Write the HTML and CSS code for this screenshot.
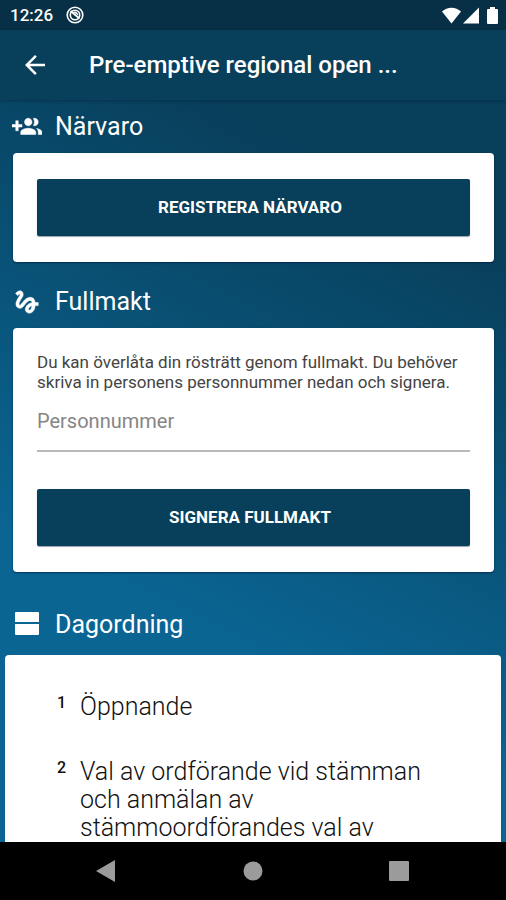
FILE: index.html
```html
<!DOCTYPE html>
<html lang="sv">
<head>
<meta charset="utf-8">
<meta name="viewport" content="width=device-width, initial-scale=1">
<title>Stämma</title>
<link rel="stylesheet" href="styles.css">
</head>
<body>
<div class="screen">
  <div class="status">
    <span class="clock">12:26</span>
    <svg class="status-app" width="18" height="18" viewBox="0 0 18 18" aria-hidden="true">
      <circle cx="9" cy="9" r="7.8" fill="none" stroke="#fff" stroke-width="1.600"/>
      <circle cx="9" cy="9" r="4.700" fill="none" stroke="#fff" stroke-width="1.600"/>
      <path d="M4.500 5l9 7.500" fill="none" stroke="#fff" stroke-width="1.800"/>
      <path d="M7 6c2.600-1.400 5 .4 5.400 3.600z" fill="#fff"/>
    </svg>
    <span class="status-icons">
      <svg width="19" height="17" viewBox="0 0 19 17" aria-hidden="true"><path d="M9.500 16.500L0 4.500C5-.6 14-.6 19 4.500z" fill="#fff"/></svg>
      <svg width="16" height="17" viewBox="0 0 16 17" aria-hidden="true"><path d="M16 .5v16H0z" fill="#fff"/></svg>
      <svg class="battery" width="11" height="17" viewBox="0 0 11 17" aria-hidden="true"><path d="M3 0h5v2h2a1 1 0 0 1 1 1v13a1 1 0 0 1-1 1H1a1 1 0 0 1-1-1V3a1 1 0 0 1 1-1h2z" fill="#fff"/></svg>
    </span>
  </div>
  <header class="appbar">
    <button class="back" type="button" aria-label="Tillbaka">
      <svg width="30" height="30" viewBox="0 0 24 24" aria-hidden="true"><path d="M20 11H7.830l5.590-5.590L12 4l-8 8 8 8 1.410-1.410L7.830 13H20z" fill="#fff"/></svg>
    </button>
    <h1 class="title">Pre-emptive regional open ...</h1>
  </header>
  <main class="content">
    <section>
      <h2 class="heading">
        <svg width="30" height="30" viewBox="0 0 24 24" aria-hidden="true"><path d="M8 10H5V7H3v3H0v2h3v3h2v-3h3v-2zm10 1c1.660 0 2.990-1.340 2.990-3S19.660 5 18 5c-.32 0-.63.050-.91.140.57.810.9 1.790.9 2.860s-.34 2.040-.9 2.860c.28.090.59.140.91.140zm-5 0c1.660 0 2.990-1.340 2.990-3S14.660 5 13 5s-3 1.340-3 3 1.340 3 3 3zm6.620 2.160c.83.730 1.380 1.660 1.380 2.840v2h3v-2c0-1.540-2.370-2.490-4.380-2.840zM13 13c-2 0-6 1-6 3v2h12v-2c0-2-4-3-6-3z" fill="#fff" stroke="#fff" stroke-width=".4"/></svg>
        Närvaro
      </h2>
      <div class="card">
        <button class="action" type="button">REGISTRERA NÄRVARO</button>
      </div>
    </section>
    <section>
      <h2 class="heading">
        <svg width="30" height="30" viewBox="0 0 24 24" aria-hidden="true"><path d="M4.590 6.890c.7-.71 1.400-1.350 1.710-1.220.5.200 0 1.030-.3 1.520-.25.420-2.860 3.890-2.860 6.310 0 1.280.48 2.340 1.340 2.980.75.560 1.740.73 2.640.46 1.070-.31 1.950-1.400 3.060-2.770 1.210-1.490 2.830-3.440 4.080-3.440 1.630 0 1.650 1.010 1.760 1.790-3.780.64-5.380 3.670-5.380 5.370s1.440 3.090 3.210 3.090c1.630 0 4.290-1.330 4.690-6.100H21v-2.500h-2.470c-.15-1.650-1.090-4.200-4.030-4.200-2.250 0-4.180 1.910-4.940 2.840-.58.730-2.060 2.480-2.290 2.720-.25.300-.68.840-1.110.84-.45 0-.72-.83-.36-1.920.35-1.090 1.400-2.860 1.850-3.520.78-1.140 1.300-1.920 1.300-3.280C8.950 3.690 7.310 3 6.440 3 5.120 3 3.970 4 3.720 4.250c-.36.360-.66.660-.88.930l1.750 1.710zm9.290 11.660c-.31 0-.74-.26-.74-.72 0-.6.730-2.200 2.870-2.760-.3 2.690-1.430 3.480-2.130 3.480z" fill="#fff" stroke="#fff" stroke-width=".4"/></svg>
        Fullmakt
      </h2>
      <form class="card proxy" onsubmit="return false">
        <p class="info">Du kan överlåta din rösträtt genom fullmakt. Du behöver skriva in personens personnummer nedan och signera.</p>
        <input class="field" type="text" placeholder="Personnummer" aria-label="Personnummer">
        <button class="action" type="submit">SIGNERA FULLMAKT</button>
      </form>
    </section>
    <section class="agenda-section">
      <h2 class="heading">
        <svg width="30" height="30" viewBox="0 0 30 30" aria-hidden="true"><path d="M4 2h22a1 1 0 0 1 1 1v9H3V3a1 1 0 0 1 1-1zM3 14h24v10a1 1 0 0 1-1 1H4a1 1 0 0 1-1-1z" fill="#fff"/></svg>
        Dagordning
      </h2>
      <div class="agenda">
        <div class="item"><span class="num">1</span><span>Öppnande</span></div>
        <div class="item"><span class="num">2</span><span>Val av ordförande vid stämman och anmälan av stämmoordförandes val av</span></div>
      </div>
    </section>
  </main>
  <nav class="navbar">
    <button type="button" aria-label="Bakåt"><svg width="20" height="22" viewBox="0 0 20 22" aria-hidden="true"><path d="M19 0v22L0 11z" fill="#9b9b9b"/></svg></button>
    <button type="button" aria-label="Hem"><svg width="20" height="20" viewBox="0 0 20 20" aria-hidden="true"><circle cx="10" cy="10" r="9.500" fill="#9b9b9b"/></svg></button>
    <button type="button" aria-label="Översikt"><svg width="20" height="20" viewBox="0 0 20 20" aria-hidden="true"><rect width="20" height="20" rx="1" fill="#9b9b9b"/></svg></button>
  </nav>
</div>
</body>
</html>
```
FILE: styles.css
```css
* { box-sizing: border-box; }
body {
  margin: 0;
  font-family: Roboto, "Liberation Sans", sans-serif;
  color: #111;
}
h1, h2, p { margin: 0; }
button { border: 0; padding: 0; background: none; font-family: inherit; }
svg { display: block; flex: none; }

.screen {
  height: 100vh;
  display: flex;
  flex-direction: column;
  overflow: hidden;
  background: linear-gradient(207deg, #083f5b 22%, #0a6593 68%, #0a6593 100%);
}
.status {
  flex: none;
  height: 30px;
  display: flex;
  align-items: center;
  padding: 0 8px 0 10px;
  gap: 13px;
  background: #073046;
  color: #fff;
}
.clock { font-size: 17px; line-height: 20px; font-weight: 500; }
.status-icons { display: flex; gap: 2px; margin-left: auto; }
.battery { margin-left: 6px; }

.appbar {
  flex: none;
  height: 70px;
  display: flex;
  align-items: center;
  gap: 39px;
  padding: 0 20px;
  background: #08405b;
  box-shadow: 0 1px 3px rgba(0, 20, 40, 0.4);
  color: #fff;
}
.title { font-size: 24px; line-height: 30px; font-weight: 500; white-space: nowrap; }

.content { flex: 1; min-height: 0; overflow: hidden; padding: 0 12px; }
.heading {
  display: flex;
  align-items: center;
  gap: 13px;
  height: 53px;
  font-size: 25px;
  font-weight: 400;
  color: #fff;
}
.card {
  display: flex;
  flex-direction: column;
  margin: 0 0 13px 1px;
  padding: 26px 24px;
  border-radius: 4px;
  background: #fff;
  box-shadow: 0 1px 2px rgba(0, 20, 60, 0.6);
}
.proxy { padding-top: 24px; }
.action {
  height: 57px;
  padding: 0 7px 1px 0;
  border-radius: 2px;
  background: #08405b;
  color: #fff;
  font-size: 17px;
  font-weight: 700;
  box-shadow: 0 1px 1px rgba(0, 20, 60, 0.4);
}
.info { font-size: 17px; line-height: 20px; color: #444; }
.field {
  width: 100%;
  height: 60px;
  margin-bottom: 37px;
  padding: 0;
  border: 0;
  border-bottom: 2px solid #b9b9b9;
  border-radius: 0;
  outline: 0;
  background: none;
  font-family: inherit;
  font-size: 20px;
}
.field::placeholder { color: #858585; opacity: 1; }

.agenda-section { padding-top: 13px; }
.agenda {
  display: flex;
  flex-direction: column;
  gap: 37px;
  margin: 4px -7px 0;
  padding: 38px 74px 0 50px;
  border-radius: 4px 4px 0 0;
  background: #fff;
  font-size: 25px;
  font-weight: 300;
  line-height: 28px;
}
.item { display: flex; gap: 12px; }
.num { width: 13px; flex: none; text-align: center; font-size: 16px; line-height: 20px; font-weight: 500; }

.navbar {
  flex: none;
  height: 58px;
  display: flex;
  align-items: center;
  justify-content: space-between;
  padding: 0 97px 0 96px;
  background: #000;
}
```
